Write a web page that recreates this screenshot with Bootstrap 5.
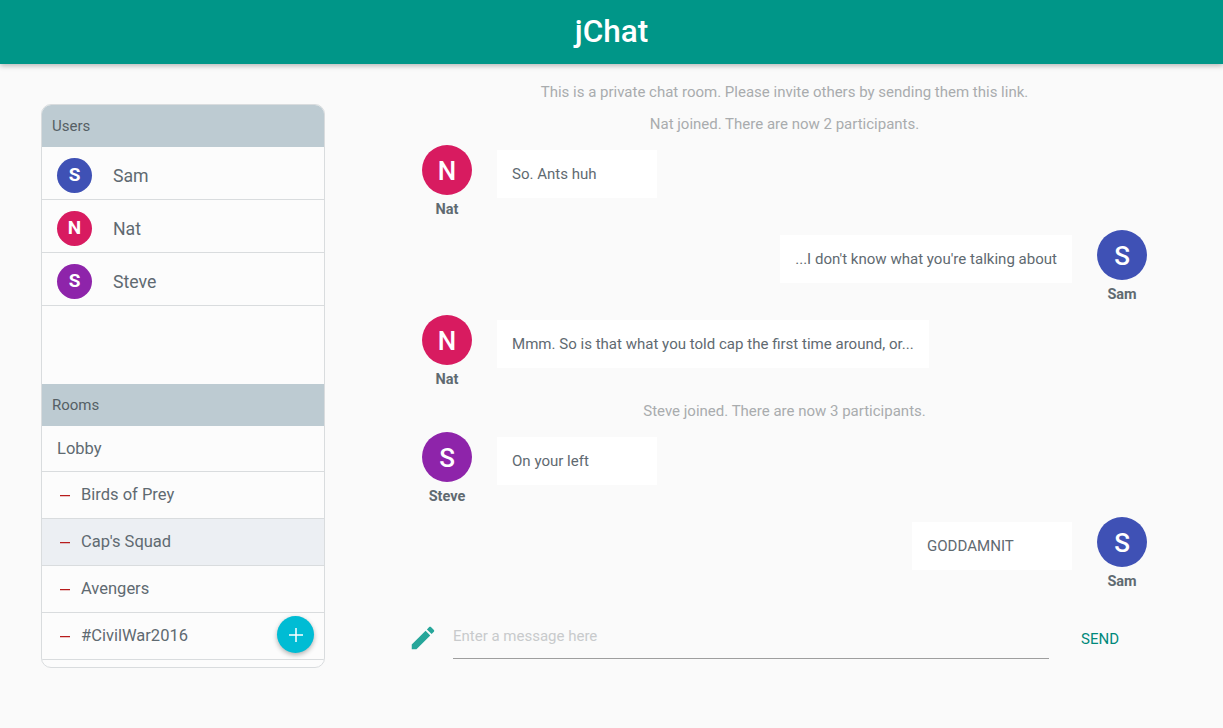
<!DOCTYPE html>
<html lang="en">
<head>
  <meta charset="UTF-8">
  <meta name="viewport" content="width=device-width, initial-scale=1">
  <title>jChat</title>
  <link href="https://cdn.jsdelivr.net/npm/bootstrap@5.3.0/dist/css/bootstrap.min.css" rel="stylesheet">
  <style>
    html, body {
      height: 100%;
    }
    body {
      background: #fafafa;
      color: #5f6a71;
      font-family: Roboto, "Liberation Sans", sans-serif;
      overflow: hidden;
    }
    .app-header {
      height: 64px;
      background: #009688;
      color: #fff;
      font-size: 31.5px;
      font-weight: 500;
      line-height: 63px;
      text-align: center;
      box-shadow: 0 2px 5px rgba(0, 0, 0, .26);
    }
    /* Sidebar */
    .side-panel {
      width: 284px;
      height: 564px;
      margin: 40px 0 0 41px;
      background: #fcfcfc;
      border: 1px solid #d9dcde;
      border-radius: 10px;
      overflow: hidden;
      flex-shrink: 0;
    }
    .panel-title {
      height: 42px;
      background: #bdcbd2;
      color: #555f65;
      font-size: 15px;
      line-height: 42px;
      padding-left: 10px;
    }
    .side-panel .list-group .list-group-item {
      background: transparent;
      color: #5f6a71;
      border-color: #d9dcde;
      border-style: solid;
      border-width: 0 0 1px;
      padding: 0 0 0 15px;
      display: flex;
      align-items: center;
    }
    .side-panel .list-group .user-row {
      height: 53px;
      font-size: 17.7px;
      padding-top: 5px;
    }
    .user-row .avatar-sm {
      margin-right: 21px;
    }
    .user-name {
      padding-top: 2px;
    }
    .side-panel .list-group .room-row {
      height: 47px;
      font-size: 16.5px;
    }
    .side-panel .list-group .room-row.lobby {
      height: 46px;
      padding-top: 1px;
    }
    .side-panel .list-group .room-row.picked {
      background: #eceff3;
    }
    .room-dash {
      width: 10px;
      height: 1px;
      background: #b71c1c;
      box-shadow: 0 1px 0 rgba(183, 28, 28, .25);
      margin: 0 11px 0 3px;
    }
    .users-gap {
      height: 78px;
    }
    .add-room {
      position: absolute;
      left: 277px;
      top: 616px;
      width: 37px;
      height: 37px;
      border: 0;
      border-radius: 50%;
      background: #00bcd4;
      box-shadow: 0 2px 5px rgba(0, 0, 0, .3);
      padding: 0;
      display: flex;
      align-items: center;
      justify-content: center;
    }
    /* Avatars */
    .avatar-sm, .avatar-lg {
      border-radius: 50%;
      color: #fff;
      display: flex;
      align-items: center;
      justify-content: center;
      flex-shrink: 0;
    }
    .avatar-sm {
      width: 35px;
      height: 35px;
      font-size: 19px;
      font-weight: 700;
    }
    .avatar-lg {
      width: 50px;
      height: 50px;
      font-size: 26px;
      font-weight: 500;
      padding-top: 2px;
    }
    .bg-sam { background: #3f51b5; }
    .bg-nat { background: #d81b60; }
    .bg-steve { background: #8e24aa; }
    /* Chat */
    .chat-pane {
      width: 725px;
      margin: 17px 0 0 97px;
      flex-shrink: 0;
    }
    .sys-line {
      height: 20px;
      line-height: 22px;
      margin-bottom: 12px;
      font-size: 15px;
      color: #a9acae;
      text-align: center;
    }
    .msg-row {
      height: 85px;
    }
    .msg-who {
      width: 50px;
      font-size: 14.5px;
      font-weight: 700;
      text-align: center;
    }
    .msg-name {
      margin: 7px -10px 0;
      line-height: 16px;
      display: block;
    }
    .msg-text {
      min-width: 160px;
      height: 48px;
      margin: 5px 25px 0;
      padding: 0 15px;
      background: #fff;
      font-size: 15.05px;
      line-height: 48px;
      white-space: nowrap;
    }
    .compose-row {
      height: 56px;
      margin-left: -14px;
    }
    .pencil-wrap {
      width: 45px;
      flex-shrink: 0;
      padding-top: 21px;
    }
    .compose-input {
      width: 596px;
      height: 57px;
      flex-shrink: 0;
      border: 0;
      border-bottom: 1px solid #9e9e9e;
      border-radius: 0;
      background: transparent;
      padding: 24px 0 12px;
      font-size: 15px;
      line-height: 20px;
      color: #5f6a71;
      outline: none;
    }
    .compose-input::placeholder {
      color: #c8cacc;
      opacity: 1;
    }
    .send-btn {
      margin: 27px 0 0 32px;
      padding: 0;
      border: 0;
      background: none;
      color: #00897b;
      font-size: 15px;
      line-height: 20px;
      align-self: flex-start;
    }
  </style>
</head>
<body>
  <header class="app-header">jChat</header>

  <div class="d-flex">
    <!-- Sidebar -->
    <aside class="side-panel">
      <div class="panel-title">Users</div>
      <ul class="list-group list-group-flush">
        <li class="list-group-item user-row"><span class="avatar-sm bg-sam">S</span><span class="user-name">Sam</span></li>
        <li class="list-group-item user-row"><span class="avatar-sm bg-nat">N</span><span class="user-name">Nat</span></li>
        <li class="list-group-item user-row"><span class="avatar-sm bg-steve">S</span><span class="user-name">Steve</span></li>
      </ul>
      <div class="users-gap"></div>
      <div class="panel-title">Rooms</div>
      <ul class="list-group list-group-flush">
        <li class="list-group-item room-row lobby">Lobby</li>
        <li class="list-group-item room-row"><span class="room-dash"></span>Birds of Prey</li>
        <li class="list-group-item room-row picked"><span class="room-dash"></span>Cap's Squad</li>
        <li class="list-group-item room-row"><span class="room-dash"></span>Avengers</li>
        <li class="list-group-item room-row"><span class="room-dash"></span>#CivilWar2016</li>
      </ul>
    </aside>
    <button class="add-room" type="button" aria-label="Add room">
      <svg width="14" height="14" viewBox="0 0 14 14"><path d="M7 0v14M0 7h14" stroke="#fff" stroke-width="1.5" fill="none"/></svg>
    </button>

    <!-- Chat -->
    <main class="chat-pane">
      <div class="sys-line">This is a private chat room. Please invite others by sending them this link.</div>
      <div class="sys-line">Nat joined. There are now 2 participants.</div>

      <div class="msg-row d-flex">
        <div class="msg-who"><div class="avatar-lg bg-nat">N</div><span class="msg-name">Nat</span></div>
        <div class="msg-text">So. Ants huh</div>
      </div>
      <div class="msg-row d-flex flex-row-reverse">
        <div class="msg-who"><div class="avatar-lg bg-sam">S</div><span class="msg-name">Sam</span></div>
        <div class="msg-text">...I don't know what you're talking about</div>
      </div>
      <div class="msg-row d-flex">
        <div class="msg-who"><div class="avatar-lg bg-nat">N</div><span class="msg-name">Nat</span></div>
        <div class="msg-text">Mmm. So is that what you told cap the first time around, or...</div>
      </div>

      <div class="sys-line">Steve joined. There are now 3 participants.</div>

      <div class="msg-row d-flex">
        <div class="msg-who"><div class="avatar-lg bg-steve">S</div><span class="msg-name">Steve</span></div>
        <div class="msg-text">On your left</div>
      </div>
      <div class="msg-row d-flex flex-row-reverse">
        <div class="msg-who"><div class="avatar-lg bg-sam">S</div><span class="msg-name">Sam</span></div>
        <div class="msg-text">GODDAMNIT</div>
      </div>

      <div class="compose-row d-flex">
        <div class="pencil-wrap">
          <svg width="30" height="30" viewBox="0 0 24 24"><path fill="#26a69a" d="M3 17.25V21h3.75L17.81 9.94l-3.75-3.75L3 17.25zM20.71 7.04c.39-.39.39-1.02 0-1.41l-2.34-2.34c-.39-.39-1.02-.39-1.41 0l-1.83 1.83 3.75 3.75 1.83-1.83z"/></svg>
        </div>
        <input class="compose-input" type="text" placeholder="Enter a message here">
        <button class="send-btn" type="button">SEND</button>
      </div>
    </main>
  </div>

  <script src="https://cdn.jsdelivr.net/npm/bootstrap@5.3.0/dist/js/bootstrap.bundle.min.js"></script>
</body>
</html>
